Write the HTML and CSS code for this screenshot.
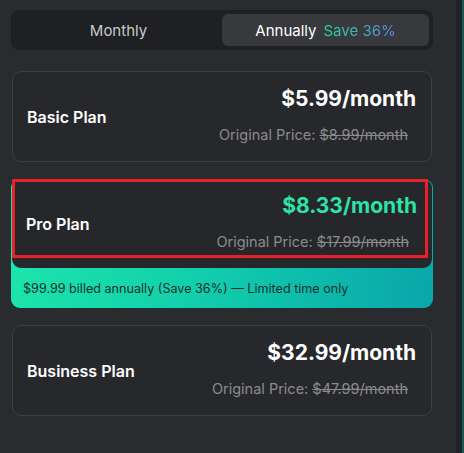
FILE: index.html
```html
<!DOCTYPE html>
<html>
<head>
<meta charset="utf-8">
<link rel="stylesheet" href="styles.css">
</head>
<body>
<div class="page">
  <div class="wrap">
    <div class="toggle">
      <div class="opt">Monthly</div>
      <div class="opt active">Annually <span class="save">Save 36%</span></div>
    </div>

    <div class="card">
      <div class="name">Basic Plan</div>
      <div class="prices">
        <div class="price">$5.99/month</div>
        <div class="orig">Original Price: <s>$8.99/month</s></div>
      </div>
    </div>

    <div class="pro">
      <div class="card inner">
        <div class="name">Pro Plan</div>
        <div class="prices">
          <div class="price green">$8.33/month</div>
          <div class="orig">Original Price: <s>$17.99/month</s></div>
        </div>
      </div>
      <div class="banner">$99.99 billed annually (Save 36%) — Limited time only</div>
      <div class="highlight"></div>
    </div>

    <div class="card">
      <div class="name">Business Plan</div>
      <div class="prices">
        <div class="price">$32.99/month</div>
        <div class="orig">Original Price: <s>$47.99/month</s></div>
      </div>
    </div>
  </div>
  <div class="scroll"></div>
</div>
</body>
</html>
```

FILE: styles.css
```css
* { box-sizing: border-box; }
html, body { margin: 0; padding: 0; }
body {
  background: #2a2b2e;
  font-family: "Inter", "Open Sans", sans-serif;
  color: #fff;
  width: 464px;
  height: 453px;
  overflow: hidden;
}
.page {
  display: flex;
  height: 453px;
}
.wrap {
  width: 422px;
  margin: 10px 0 0 11px;
  display: flex;
  flex-direction: column;
}
.toggle {
  height: 40px;
  background: #1f2023;
  border-radius: 8px;
  padding: 4px;
  display: grid;
  grid-template-columns: 1fr 207px;
}
.opt {
  display: flex;
  align-items: center;
  justify-content: center;
  font-size: 15px;
  color: #c9c9cb;
  border-radius: 6px;
}
.opt.active {
  background: #38393c;
  color: #fff;
  height: 32px;
}
.save {
  margin-left: 7px;
  background: linear-gradient(90deg, #2ad49b, #5b8ee6);
  -webkit-background-clip: text;
  background-clip: text;
  color: transparent;
}
.card {
  margin-top: 21px;
  margin-left: 1px;
  width: 420px;
  height: 91px;
  border: 1px solid #3d3e42;
  border-radius: 9px;
  background: #27282b;
  display: flex;
  align-items: center;
  justify-content: space-between;
  padding: 0 15px 0 14px;
}
.name {
  font-size: 16px;
  font-weight: 600;
  color: #fff;
}
.prices {
  display: flex;
  flex-direction: column;
  align-items: flex-end;
  align-self: flex-start;
  padding-top: 13px;
}
.price {
  font-size: 21px;
  font-weight: 700;
  line-height: 28px;
  color: #fff;
}
.price.green { color: #2ee3a5; }
.orig {
  margin-top: 12px;
  margin-right: 8px;
  font-size: 14.5px;
  line-height: 20px;
  color: #8b8b8e;
}
.orig s { color: #8b8b8e; }
.pro {
  position: relative;
  margin-top: 17px;
  height: 129px;
  border-radius: 9px;
  background: linear-gradient(100deg, #1de6ab 0%, #12cfac 45%, #09a6ab 100%);
  display: flex;
  flex-direction: column;
}
.card.inner {
  margin-top: 0;
  height: 89px;
  border: none;
  border-radius: 9px;
  background: #26272a;
}
.banner {
  flex: 1;
  display: flex;
  align-items: center;
  padding-left: 12px;
  font-size: 12.6px;
  color: #15302c;
}
.highlight {
  position: absolute;
  left: 1px;
  top: 0;
  width: 416px;
  height: 79px;
  border: 3px solid #e8202a;
  pointer-events: none;
}
.pro + .card { margin-top: 17px; }
.scroll {
  margin-left: auto;
  width: 8px;
  height: 453px;
  background: #202124;
  border-right: 2px solid #0f5a52;
}
```
